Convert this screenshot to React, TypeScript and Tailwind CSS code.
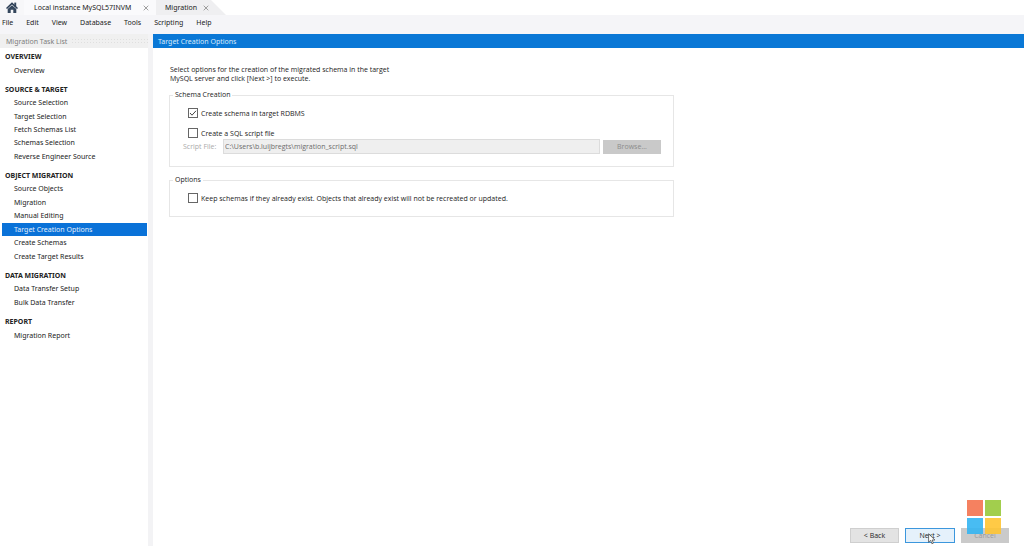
import { ReactNode, useState } from "react";

const menus = ["File", "Edit", "View", "Database", "Tools", "Scripting", "Help"];

const sections = [
  { title: "OVERVIEW", height: "h-[14px]", items: ["Overview"] },
  {
    title: "SOURCE & TARGET",
    height: "h-[67px]",
    items: ["Source Selection", "Target Selection", "Fetch Schemas List", "Schemas Selection", "Reverse Engineer Source"],
  },
  {
    title: "OBJECT MIGRATION",
    height: "h-[81px]",
    items: ["Source Objects", "Migration", "Manual Editing", "Target Creation Options", "Create Schemas", "Create Target Results"],
  },
  { title: "DATA MIGRATION", height: "h-[27px]", items: ["Data Transfer Setup", "Bulk Data Transfer"] },
  { title: "REPORT", height: "h-[14px]", items: ["Migration Report"] },
];

const current = "Target Creation Options";

function HomeIcon() {
  return (
    <svg viewBox="0 0 12 12" className="h-3 w-3" aria-hidden="true">
      <path d="M8.3 .6h1.9v4H8.3z" fill="#34465c" />
      <path d="M6 .3 0 6l1 1L6 2.5l5 4.5 1-1z" fill="#2b3d54" />
      <path d="M6 3.2 1.7 7v4h3V7.8h2.6V11h3V7z" fill="#34465c" />
    </svg>
  );
}

function CloseIcon() {
  return (
    <svg viewBox="0 0 6 6" className="h-[6px] w-[6px]" aria-hidden="true">
      <path d="M.7.7l4.6 4.6M5.3.7.7 5.3" stroke="#888" strokeWidth="0.8" fill="none" />
    </svg>
  );
}

function TaskList() {
  return (
    <aside className="flex w-[148px] shrink-0 flex-col bg-white font-['Noto_Sans',sans-serif]">
      <h2 className="flex h-[14px] items-center gap-1 bg-[#f0f0f0] pl-[6px] text-[#7d7d7d]">
        Migration Task List
        <span className="h-[6px] flex-1 bg-[radial-gradient(#dfdfdf_1px,transparent_1px)] bg-[size:3px_3px]" />
      </h2>
      <nav className="flex flex-col gap-[6px] pt-[2px] pl-[2px]">
        {sections.map((s) => (
          <section key={s.title}>
            <h3 className="h-[13px] pl-[3px] leading-[13px] font-bold text-[#222]">{s.title}</h3>
            <ul className={`grid auto-rows-fr ${s.height}`}>
              {s.items.map((item) => (
                <li key={item} className="flex min-h-0">
                  <a
                    href="#"
                    aria-current={item === current ? "step" : undefined}
                    className={`flex flex-1 items-center pl-3 whitespace-nowrap ${item === current ? "mr-px bg-[#0a72d8] text-[#e4f0fc]" : ""}`}
                  >
                    {item}
                  </a>
                </li>
              ))}
            </ul>
          </section>
        ))}
      </nav>
    </aside>
  );
}

function Check({ label, initial = false }: { label: string; initial?: boolean }) {
  const [on, setOn] = useState(initial);
  return (
    <label className="flex h-[10px] items-center gap-[3px]">
      <span className="grid h-[10px] w-[10px] shrink-0">
        <input
          type="checkbox"
          checked={on}
          onChange={(e) => setOn(e.target.checked)}
          className="col-start-1 row-start-1 h-[10px] w-[10px] appearance-none border border-[#666] bg-white"
        />
        {on && (
          <svg viewBox="0 0 10 10" className="pointer-events-none col-start-1 row-start-1 h-[10px] w-[10px]" aria-hidden="true">
            <path d="M2 5l2 2.2L8 2.8" stroke="#444" strokeWidth="1" fill="none" />
          </svg>
        )}
      </span>
      {label}
    </label>
  );
}

function Group({ title, className, children }: { title: string; className: string; children: ReactNode }) {
  return (
    <fieldset className={`w-full max-w-[505px] border border-[#e6e6e6] ${className}`}>
      <legend className="ml-[3px] px-[2px] leading-[10px]">{title}</legend>
      {children}
    </fieldset>
  );
}

function WindowsLogo() {
  return (
    <svg viewBox="0 0 34 34" className="pointer-events-none absolute right-[23px] bottom-3 h-[34px] w-[34px] opacity-90" aria-hidden="true">
      <path d="M0 0h16v16H0z" fill="#f4744f" />
      <path d="M18 0h16v16H18z" fill="#98c93a" />
      <path d="M0 18h16v16H0z" fill="#35b5f2" />
      <path d="M18 18h16v16H18z" fill="#ffc533" />
    </svg>
  );
}

function Cursor() {
  return (
    <svg viewBox="0 0 8 12" className="pointer-events-none absolute top-1 left-[22px] h-3 w-2" aria-hidden="true">
      <path d="M.6.8v8.4l2-1.8 1.3 3.3 1.5-.6L4.1 7h2.8z" fill="#fff" stroke="#333" strokeWidth="0.7" />
    </svg>
  );
}

export default function App() {
  return (
    <div className="flex min-h-screen flex-col bg-[#f3f3f5] font-['Open_Sans','Noto_Sans',sans-serif] text-[7px] leading-[9px] text-[#222]">
      <div className="flex h-[15px] bg-white">
        <button aria-label="Home" className="flex w-6 items-center justify-center bg-[#f7f7f9]">
          <HomeIcon />
        </button>
        <div className="flex w-[132px] items-center justify-between bg-[#fafafc] pr-[7px] pl-[10px] font-['Noto_Sans',sans-serif]">
          <button>Local instance MySQL57INVM</button>
          <button aria-label="Close Local instance MySQL57INVM">
            <CloseIcon />
          </button>
        </div>
        <div className="flex w-[70px] items-center gap-[6px] bg-[#efeff1] pl-[9px] font-['Noto_Sans',sans-serif] [clip-path:polygon(0_0,55px_0,100%_100%,0_100%)]">
          <button>Migration</button>
          <button aria-label="Close Migration">
            <CloseIcon />
          </button>
        </div>
      </div>
      <div role="menubar" className="flex h-[19px] items-center gap-[13px] bg-[#f5f5f8] pb-[4px] pl-[2px] font-['Noto_Sans',sans-serif]">
        {menus.map((m) => (
          <button key={m} role="menuitem">
            {m}
          </button>
        ))}
      </div>
      <div className="flex flex-1 gap-[5px]">
        <TaskList />
        <main className="flex flex-1 flex-col bg-white">
          <h1 className="flex h-[14px] items-center bg-[#0a78d6] pl-[5px] font-['Noto_Sans',sans-serif] text-[#d9ebfb]">
            Target Creation Options
          </h1>
          <div className="flex flex-col items-start pt-[17px] pr-4 pl-4">
            <p className="mb-[7px] pl-px">
              Select options for the creation of the migrated schema in the target
              <br />
              MySQL server and click [Next &gt;] to execute.
            </p>
            <Group title="Schema Creation" className="mb-[8px] h-[77px]">
              <div className="flex flex-col gap-[10px] pt-2 pr-3 pl-[18px]">
                <Check label="Create schema in target RDBMS" initial />
                <Check label="Create a SQL script file" />
              </div>
              <div className="flex items-center pt-px pr-3 pl-[13px]">
                <label htmlFor="script" className="w-[40px] text-[#aaa]">
                  Script File:
                </label>
                <input
                  id="script"
                  disabled
                  defaultValue="C:\Users\b.luijbregts\migration_script.sql"
                  className="h-[15px] min-w-0 flex-1 border border-[#dcdcdc] bg-[#efefef] px-px text-[#6c6c6c]"
                />
                <button disabled className="ml-[3px] h-[14px] w-[58px] bg-[#c9c9c9] text-[#8c8c8c]">
                  Browse...
                </button>
              </div>
            </Group>
            <Group title="Options" className="h-[42px]">
              <div className="pt-2 pl-[18px]">
                <Check label="Keep schemas if they already exist. Objects that already exist will not be recreated or updated." />
              </div>
            </Group>
          </div>
          <footer className="relative mt-auto flex justify-end gap-[6px] pr-[15px] pb-[3px]">
            <button className="h-[15px] w-[49px] border border-[#cfcfcf] bg-[#e3e3e3]">&lt; Back</button>
            <button className="relative h-[15px] w-[50px] border border-[#3c97dd] bg-[#e5f1fb]">
              Next &gt;
              <Cursor />
            </button>
            <button disabled className="h-[15px] w-[48px] bg-[#cacaca] text-[#9a9a9a]">
              Cancel
            </button>
            <WindowsLogo />
          </footer>
        </main>
      </div>
    </div>
  );
}
